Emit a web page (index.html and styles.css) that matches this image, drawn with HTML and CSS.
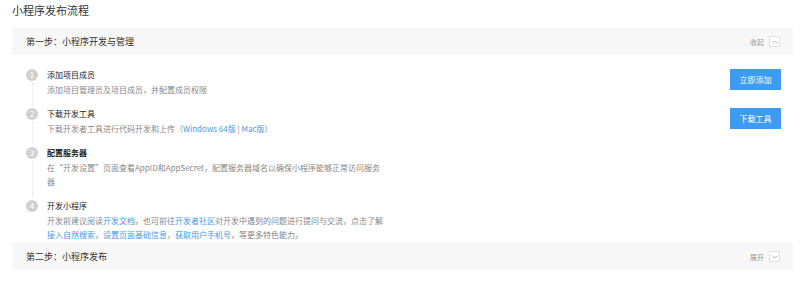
FILE: index.html
```html
<!DOCTYPE html>
<html lang="zh-CN">
<head>
    <meta charset="UTF-8">
    <meta name="viewport" content="width=device-width, initial-scale=1.0">
    <title>小程序发布流程</title>
    <link rel="stylesheet" href="styles.css">
</head>
<body>
    <h1 class="page-title">小程序发布流程</h1>

    <div class="panel">
        <div class="panel-head">
            <span class="panel-title">第一步：小程序开发与管理</span>
            <span class="panel-toggle">收起 <i class="toggle-box">
                <svg width="6" height="4" viewBox="0 0 6 4"><path d="M0.5 3.5 L3 1 L5.5 3.5" fill="none" stroke="#aaa" stroke-width="0.8"/></svg>
            </i></span>
        </div>
        <div class="panel-body">
            <div class="step">
                <div class="step-rail"><span class="step-num">1</span><span class="step-line"></span></div>
                <div class="step-content">
                    <div class="step-title">添加项目成员</div>
                    <div class="step-desc">添加项目管理员及项目成员，并配置成员权限</div>
                </div>
                <button class="btn">立即添加</button>
            </div>
            <div class="step">
                <div class="step-rail"><span class="step-num">2</span><span class="step-line"></span></div>
                <div class="step-content">
                    <div class="step-title">下载开发工具</div>
                    <div class="step-desc">下载开发者工具进行代码开发和上传（<a href="#">Windows 64版</a> | <a href="#">Mac版</a>）</div>
                </div>
                <button class="btn">下载工具</button>
            </div>
            <div class="step">
                <div class="step-rail"><span class="step-num">3</span><span class="step-line"></span></div>
                <div class="step-content">
                    <div class="step-title bold">配置服务器</div>
                    <div class="step-desc">在“开发设置”页面查看AppID和AppSecret，配置服务器域名以确保小程序能够正常访问服务器</div>
                </div>
            </div>
            <div class="step last">
                <div class="step-rail"><span class="step-num">4</span></div>
                <div class="step-content">
                    <div class="step-title">开发小程序</div>
                    <div class="step-desc">开发前建议阅读<a href="#">开发文档</a>，也可前往<a href="#">开发者社区</a>对开发中遇到的问题进行提问与交流，点击了解<a href="#">接入自然搜索</a>，<a href="#">设置页面基础信息</a>，<a href="#">获取用户手机号</a>，等更多特色能力。</div>
                </div>
            </div>
        </div>
    </div>

    <div class="panel">
        <div class="panel-head">
            <span class="panel-title">第二步：小程序发布</span>
            <span class="panel-toggle">展开 <i class="toggle-box">
                <svg width="6" height="4" viewBox="0 0 6 4"><path d="M0.5 0.5 L3 3 L5.5 0.5" fill="none" stroke="#aaa" stroke-width="0.8"/></svg>
            </i></span>
        </div>
    </div>
</body>
</html>
```

FILE: styles.css
```css
/* General Styles */
body {
    margin: 0;
    font-family: "Noto Sans CJK SC", "Liberation Sans", sans-serif;
    background: #fff;
    color: #333;
    overflow: hidden;
}

a {
    color: #459ae9;
    text-decoration: none;
}

.page-title {
    margin: 0 0 8px 12px;
    font-size: 11px;
    font-weight: normal;
    line-height: 20px;
    color: #333;
}

.panel {
    margin: 0 7px 0 12px;
}

.panel-head {
    height: 27px;
    background: #f7f7f7;
    padding: 0 13px 0 14px;
    display: flex;
    align-items: center;
    justify-content: space-between;
}

.panel-title {
    font-size: 9px;
    color: #333;
}

.panel-toggle {
    display: flex;
    align-items: center;
    gap: 5px;
    font-size: 7px;
    color: #999;
}

.toggle-box {
    width: 9px;
    height: 9px;
    border: 1px solid #e2e2e2;
    background: #fff;
    display: flex;
    align-items: center;
    justify-content: center;
}

.panel-body {
    padding: 13px 12px 1px 14px;
}

.step {
    display: flex;
    align-items: stretch;
}

.step-rail {
    width: 12px;
    display: flex;
    flex-direction: column;
    align-items: center;
    margin-right: 9px;
}

.step-num {
    width: 12px;
    height: 12px;
    margin-top: 1px;
    border-radius: 50%;
    background: #d0d0d0;
    color: #fff;
    font-size: 8px;
    line-height: 12px;
    text-align: center;
}

.step-line {
    flex: 1;
    border-left: 1px dotted #e0e0e0;
    margin: 2px 0;
}

.step-content {
    width: 338px;
    padding-bottom: 10px;
}

.step.last .step-content {
    padding-bottom: 0;
}

.step-title {
    font-size: 8px;
    line-height: 14px;
    color: #222;
}

.step-title.bold {
    font-weight: bold;
}

.step-desc {
    margin-top: 1px;
    font-size: 8px;
    line-height: 14px;
    color: #888;
}

.btn {
    margin-left: auto;
    margin-top: 1px;
    width: 51px;
    height: 21px;
    background-color: #3e9bf4;
    border: none;
    padding: 0;
    font-family: inherit;
    font-size: 8px;
    color: #fff;
    cursor: pointer;
}

.btn:hover {
    background-color: #2f8be3;
}
```
